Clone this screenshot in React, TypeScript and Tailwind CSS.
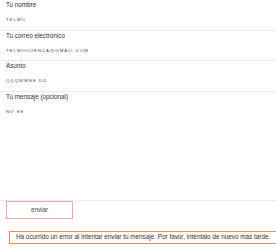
import React from 'react';

const Field = ({ label, value }: { label: string; value: string }) => (
  <div className="flex flex-col">
    <label className="h-[10px] pl-[6px] text-[6.3px] leading-[10px] text-[#333]">{label}</label>
    <div className="h-[20.5px] border-b border-[#ececec] pl-[6px] flex items-center">
      <span className="text-[4.3px] leading-[5px] tracking-[1px] uppercase text-[#444]">{value}</span>
    </div>
  </div>
);

const App = () => {
  return (
    <div className="w-[276px] h-[250px] overflow-hidden bg-white" style={{ fontFamily: '"Liberation Sans", Arial, sans-serif' }}>
      <Field label="Tu nombre" value="Telmo" />
      <Field label="Tu correo electrónico" value="telmocuenca@gmail.com" />
      <Field label="Asunto" value="qqqwwee dd" />

      <div className="flex flex-col">
        <label className="h-[10px] pl-[6px] text-[6.3px] leading-[10px] text-[#333]">Tu mensaje (opcional)</label>
        <div className="h-[99px] border-b border-[#ececec] pl-[6px] pt-[7px] leading-[5px]">
          <span className="block text-[4.3px] leading-[5px] tracking-[1px] uppercase text-[#444]">No se</span>
        </div>
      </div>

      <button className="ml-[6px] w-[67px] h-[18px] border border-[#f5a5a5] text-[6.3px] text-[#444] flex items-center justify-center">
        enviar
      </button>

      <div className="mt-[12px] ml-[9px] w-[290px] h-[13px] border border-[#ef8a5c] pl-[6px] flex items-center">
        <p className="text-[6.35px] leading-[8px] text-[#333] whitespace-nowrap">
          Ha ocurrido un error al intentar enviar tu mensaje. Por favor, inténtalo de nuevo más tarde.
        </p>
      </div>
    </div>
  );
};

export default App;
